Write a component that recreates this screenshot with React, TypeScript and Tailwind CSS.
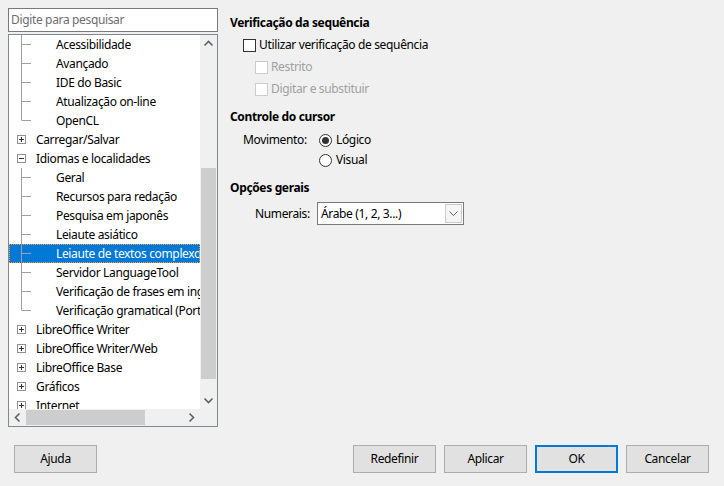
import React from 'react';

type Row = {
  label: string;
  kind: 'child' | 'plus' | 'minus';
  last?: boolean;
  selected?: boolean;
};

const rows: Row[] = [
  { label: 'Acessibilidade', kind: 'child' },
  { label: 'Avançado', kind: 'child' },
  { label: 'IDE do Basic', kind: 'child' },
  { label: 'Atualização on-line', kind: 'child' },
  { label: 'OpenCL', kind: 'child', last: true },
  { label: 'Carregar/Salvar', kind: 'plus' },
  { label: 'Idiomas e localidades', kind: 'minus' },
  { label: 'Geral', kind: 'child' },
  { label: 'Recursos para redação', kind: 'child' },
  { label: 'Pesquisa em japonês', kind: 'child' },
  { label: 'Leiaute asiático', kind: 'child' },
  { label: 'Leiaute de textos complexos', kind: 'child', selected: true },
  { label: 'Servidor LanguageTool', kind: 'child' },
  { label: 'Verificação de frases em inglês', kind: 'child' },
  { label: 'Verificação gramatical (Português)', kind: 'child', last: true },
  { label: 'LibreOffice Writer', kind: 'plus' },
  { label: 'LibreOffice Writer/Web', kind: 'plus' },
  { label: 'LibreOffice Base', kind: 'plus' },
  { label: 'Gráficos', kind: 'plus' },
  { label: 'Internet', kind: 'plus' },
];

const font = { fontFamily: '"Noto Sans", "Open Sans", sans-serif' };

function Expander({ open }: { open: boolean }) {
  return (
    <svg width="27" height="19" className="shrink-0">
      <rect x="8.5" y="5.5" width="8" height="8" fill="#fff" stroke="#919191" />
      <line x1="10" y1="9.5" x2="15" y2="9.5" stroke="#333" />
      {!open && <line x1="12.5" y1="7" x2="12.5" y2="12" stroke="#333" />}
    </svg>
  );
}

function Guide({ last }: { last?: boolean }) {
  return (
    <svg width="47" height="19" className="shrink-0">
      <line x1="12.5" y1="0" x2="12.5" y2={last ? 9.5 : 19} stroke="#a0a0a0" />
      <line x1="13" y1="9.5" x2="22" y2="9.5" stroke="#a0a0a0" />
    </svg>
  );
}

function TreeRow({ row }: { row: Row }) {
  return (
    <div
      className={`flex h-[19px] items-center whitespace-nowrap text-[12px] ${
        row.selected ? 'bg-[#0078d7] text-white outline-1 outline-dotted -outline-offset-1 outline-[#f0a040]' : 'text-black'
      }`}
    >
      {row.kind === 'child' ? <Guide last={row.last} /> : <Expander open={row.kind === 'minus'} />}
      <span className="leading-[19px]">{row.label}</span>
    </div>
  );
}

function Chevron({ dir }: { dir: 'up' | 'down' | 'left' | 'right' }) {
  const d = {
    up: 'M4.5 10.5 L8.5 6.5 L12.5 10.5',
    down: 'M4.5 6.5 L8.5 10.5 L12.5 6.5',
    left: 'M10.5 4.5 L6.5 8.5 L10.5 12.5',
    right: 'M6.5 4.5 L10.5 8.5 L6.5 12.5',
  }[dir];
  return (
    <svg width="17" height="17" className="shrink-0">
      <path d={d} fill="none" stroke="#606060" strokeWidth="1.6" />
    </svg>
  );
}

function Checkbox({ label, disabled }: { label: string; disabled?: boolean }) {
  return (
    <div className="flex h-[22px] items-center">
      <span
        className={`h-[13px] w-[13px] border bg-white ${disabled ? 'border-[#cccccc]' : 'border-[#333333]'}`}
      />
      <span className={`ml-[3px] text-[12px] ${disabled ? 'text-[#a0a0a0]' : 'text-black'}`}>{label}</span>
    </div>
  );
}

function Radio({ label, checked }: { label: string; checked?: boolean }) {
  return (
    <div className="flex h-[20px] items-center">
      <span className="flex h-[13px] w-[13px] items-center justify-center rounded-full border border-[#333333] bg-white">
        {checked && <span className="h-[7px] w-[7px] rounded-full bg-[#333333]" />}
      </span>
      <span className="ml-[4px] text-[12px] text-black">{label}</span>
    </div>
  );
}

function Button({ label, focus }: { label: string; focus?: boolean }) {
  return (
    <button
      className={`flex h-[28px] w-[83px] items-center justify-center bg-[#e1e1e1] text-[12px] text-black ${
        focus ? 'border-2 border-[#0078d7]' : 'border border-[#adadad]'
      }`}
    >
      {label}
    </button>
  );
}

export default function App() {
  return (
    <div
      className="flex h-[486px] w-[724px] flex-col overflow-hidden bg-[#f0f0f0] tracking-[-0.35px]"
      style={font}
    >
      <div className="flex flex-1">
        {/* Left: search + tree */}
        <div className="ml-[8px] mt-[8px] flex w-[210px] flex-col">
          <div className="flex h-[24px] items-center border border-[#7a7a7a] bg-white px-[2px] text-[12px] text-[#6d6d6d]">
            Digite para pesquisar
          </div>
          <div className="mt-[2px] flex h-[393px] flex-col border border-[#828790] bg-white">
            <div className="flex min-h-0 flex-1">
              <div className="min-w-0 flex-1 overflow-hidden">
                {rows.map((r) => (
                  <TreeRow key={r.label} row={r} />
                ))}
              </div>
              <div className="flex w-[17px] flex-col bg-[#f0f0f0]">
                <Chevron dir="up" />
                <div className="flex-1 px-[1px] pt-[116px]">
                  <div className="h-[211px] bg-[#cdcdcd]" />
                </div>
                <Chevron dir="down" />
              </div>
            </div>
            <div className="flex h-[17px] bg-[#f0f0f0]">
              <Chevron dir="left" />
              <div className="flex-1 py-[1px]">
                <div className="h-full w-[119px] bg-[#cdcdcd]" />
              </div>
              <Chevron dir="right" />
              <div className="w-[17px] bg-[#f0f0f0]" />
            </div>
          </div>
        </div>

        {/* Right: options */}
        <div className="ml-[12px] flex flex-col pt-[14px] text-[12px] text-black">
          <div className="h-[18px] font-bold leading-[18px]">Verificação da sequência</div>
          <div className="ml-[13px] mt-[2px]">
            <Checkbox label="Utilizar verificação de sequência" />
            <div className="ml-[12px]">
              <Checkbox label="Restrito" disabled />
              <Checkbox label="Digitar e substituir" disabled />
            </div>
          </div>

          <div className="mt-[8px] h-[18px] font-bold leading-[18px]">Controle do cursor</div>
          <div className="ml-[13px] mt-[4px] flex">
            <div className="flex h-[20px] w-[76px] items-center">Movimento:</div>
            <div className="flex flex-col">
              <Radio label="Lógico" checked />
              <Radio label="Visual" />
            </div>
          </div>

          <div className="mt-[9px] h-[18px] font-bold leading-[18px]">Opções gerais</div>
          <div className="ml-[25px] mt-[5px] flex items-center">
            <div className="w-[62px]">Numerais:</div>
            <div className="flex h-[23px] w-[147px] items-center border border-[#7a7a7a] bg-white">
              <span className="flex-1 pl-[3px]">Árabe (1, 2, 3...)</span>
              <span className="mr-[1px] flex h-[19px] w-[17px] items-center justify-center border border-[#cccccc] bg-[#f5f5f5]">
                <svg width="9" height="6">
                  <path d="M0.5 0.5 L4.5 4.5 L8.5 0.5" fill="none" stroke="#606060" />
                </svg>
              </span>
            </div>
          </div>
        </div>
      </div>

      {/* Bottom buttons */}
      <div className="flex h-[60px] items-start px-[14px] pt-[18px]">
        <Button label="Ajuda" />
        <div className="flex-1" />
        <div className="mr-[1px] flex gap-[8px]">
          <Button label="Redefinir" />
          <Button label="Aplicar" />
          <Button label="OK" focus />
          <Button label="Cancelar" />
        </div>
      </div>
    </div>
  );
}
